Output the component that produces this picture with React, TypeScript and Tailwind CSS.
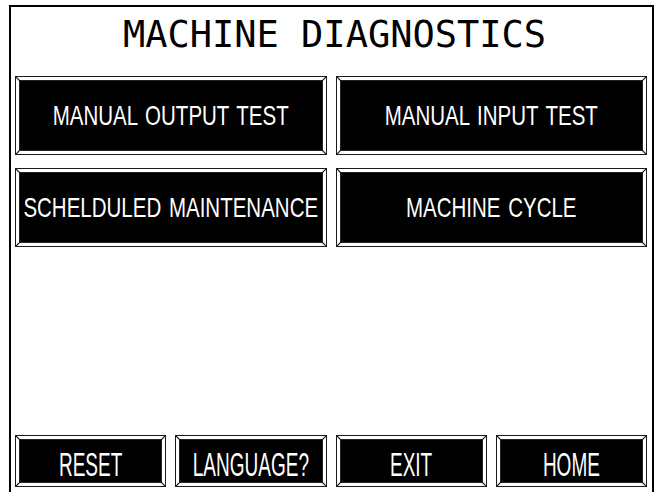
import type { ReactNode } from "react";

const Corner = ({ pos }: { pos: "tl" | "tr" | "bl" | "br" }) => {
  const place = {
    tl: "top-0 left-0",
    tr: "top-0 right-0",
    bl: "bottom-0 left-0",
    br: "bottom-0 right-0",
  }[pos];
  const flip = pos === "tl" || pos === "br";
  return (
    <svg className={`absolute ${place} h-[5px] w-[5px]`} viewBox="0 0 5 5">
      {flip ? (
        <line x1="0" y1="0" x2="5" y2="5" stroke="#111" strokeWidth="1.2" />
      ) : (
        <line x1="5" y1="0" x2="0" y2="5" stroke="#111" strokeWidth="1.2" />
      )}
    </svg>
  );
};

const PanelButton = ({ children, textClass }: { children: ReactNode; textClass: string }) => (
  <div className="relative h-full border border-[#1a1a1a] bg-white p-[3px]">
    <div className="flex h-full items-center justify-center overflow-hidden border border-[#222] bg-black text-white">
      <span className={`inline-block whitespace-nowrap font-['Liberation_Sans',Arial,sans-serif] ${textClass}`}>
        {children}
      </span>
    </div>
    <Corner pos="tl" />
    <Corner pos="tr" />
    <Corner pos="bl" />
    <Corner pos="br" />
  </div>
);

export default function App() {
  const mainText = "text-[20.5px] leading-none scale-y-[1.35] [word-spacing:2px] translate-y-[1px]";
  const footText = "text-[19px] leading-none scale-y-[1.75] translate-y-[3px]";

  return (
    <div className="h-[492px] w-[655px] overflow-hidden bg-white">
      <div className="ml-[9px] mt-[5px] h-[500px] w-[645px] border-2 border-black">
        <div className="h-[69px] pt-[8px] pl-[6px] text-center font-['DejaVu_Sans_Mono',monospace] text-[37px] leading-[40px] text-black">
          MACHINE DIAGNOSTICS
        </div>
        <div className="pl-[4px] pr-[5px]">
          <div className="grid grid-cols-2 gap-x-[9px] gap-y-[13px]">
            <div className="h-[79px]">
              <PanelButton textClass={mainText}>MANUAL OUTPUT TEST</PanelButton>
            </div>
            <div className="h-[79px]">
              <PanelButton textClass={mainText}>MANUAL INPUT TEST</PanelButton>
            </div>
            <div className="h-[79px]">
              <PanelButton textClass={mainText}>SCHELDULED MAINTENANCE</PanelButton>
            </div>
            <div className="h-[79px]">
              <PanelButton textClass={mainText}>MACHINE CYCLE</PanelButton>
            </div>
          </div>
          <div className="mt-[188px] grid grid-cols-4 gap-x-[9px]">
            {["RESET", "LANGUAGE?", "EXIT", "HOME"].map((label) => (
              <div key={label} className="h-[52px]">
                <PanelButton textClass={footText}>{label}</PanelButton>
              </div>
            ))}
          </div>
        </div>
      </div>
    </div>
  );
}
